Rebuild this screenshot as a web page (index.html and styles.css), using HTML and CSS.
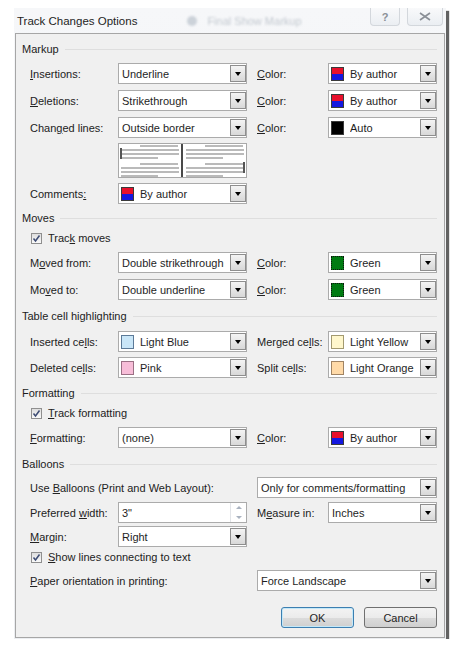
FILE: index.html
```html
<!DOCTYPE html>
<html lang="en">
<head>
    <meta charset="UTF-8">
    <link rel="stylesheet" href="styles.css">
</head>
<body>
    <div class="window">
        <div class="titlebar">
            <span class="title">Track Changes Options</span>
            <span class="ghost"><span class="ghost-icon"></span>Final Show Markup</span>
            <div class="caption-buttons">
                <span class="cap-btn cap-help">?</span>
                <span class="cap-btn cap-close">
                    <svg width="12" height="9" viewBox="0 0 12 9"><path d="M1 1 L11 8 M11 1 L1 8" stroke="#8a8f96" stroke-width="1.6" fill="none"/></svg>
                </span>
            </div>
        </div>

        <div class="panel">
            <!-- Markup -->
            <div class="group-title first">Markup</div>

            <div class="row">
                <span class="lbl"><u>I</u>nsertions:</span>
                <div class="combo"><span class="value">Underline</span><span class="arrow"></span></div>
                <span class="lbl lbl-color"><u>C</u>olor:</span>
                <div class="combo combo-color"><span class="swatch sw-author"></span><span class="value">By author</span><span class="arrow"></span></div>
            </div>

            <div class="row">
                <span class="lbl"><u>D</u>eletions:</span>
                <div class="combo"><span class="value">Strikethrough</span><span class="arrow"></span></div>
                <span class="lbl lbl-color"><u>C</u>olor:</span>
                <div class="combo combo-color"><span class="swatch sw-author"></span><span class="value">By author</span><span class="arrow"></span></div>
            </div>

            <div class="row">
                <span class="lbl">Chan<u>g</u>ed lines:</span>
                <div class="combo"><span class="value">Outside border</span><span class="arrow"></span></div>
                <span class="lbl lbl-color"><u>C</u>olor:</span>
                <div class="combo combo-color"><span class="swatch sw-auto"></span><span class="value">Auto</span><span class="arrow"></span></div>
            </div>

            <div class="preview-row">
                <svg class="preview" width="129" height="35" viewBox="0 0 129 35">
                    <rect x="0.5" y="0.5" width="128" height="34" fill="#fff" stroke="#a9a9a9"/>
                    <g stroke="#a4a4a4" stroke-width="1.4">
                        <path d="M22 3 H60 M3 7 H61 M3 11 H61 M3 15 H40 M22 21 H60 M3 25 H61 M3 29 H61 M3 33 H40"/>
                        <path d="M87 3 H125 M68 7 H126 M68 11 H126 M68 15 H105 M87 21 H125 M68 25 H126 M68 29 H126 M68 33 H105"/>
                    </g>
                    <rect x="63" y="1" width="2" height="33" fill="#4a4a4a"/>
                    <rect x="2" y="5" width="2" height="11" fill="#555"/>
                    <rect x="125" y="19" width="2" height="11" fill="#555"/>
                </svg>
            </div>

            <div class="row row-after-preview">
                <span class="lbl">Comments<u>:</u></span>
                <div class="combo"><span class="swatch sw-author"></span><span class="value">By author</span><span class="arrow"></span></div>
            </div>

            <!-- Moves -->
            <div class="group-title g-moves">Moves</div>

            <div class="check-row">
                <span class="checkbox"><svg width="9" height="9" viewBox="0 0 9 9"><path d="M1.5 4.5 L3.5 7 L7.5 1.5" stroke="#3d4c74" stroke-width="1.5" fill="none"/></svg></span>
                <span class="check-label">Trac<u>k</u> moves</span>
            </div>

            <div class="row">
                <span class="lbl">M<u>o</u>ved from:</span>
                <div class="combo"><span class="value">Double strikethrough</span><span class="arrow"></span></div>
                <span class="lbl lbl-color"><u>C</u>olor:</span>
                <div class="combo combo-color"><span class="swatch sw-green"></span><span class="value">Green</span><span class="arrow"></span></div>
            </div>

            <div class="row">
                <span class="lbl">Mo<u>v</u>ed to:</span>
                <div class="combo"><span class="value">Double underline</span><span class="arrow"></span></div>
                <span class="lbl lbl-color"><u>C</u>olor:</span>
                <div class="combo combo-color"><span class="swatch sw-green"></span><span class="value">Green</span><span class="arrow"></span></div>
            </div>

            <!-- Table cell highlighting -->
            <div class="group-title g-wide">Table cell highlighting</div>

            <div class="row row-loose">
                <span class="lbl">Inserted ce<u>l</u>ls:</span>
                <div class="combo"><span class="swatch sw-lightblue"></span><span class="value">Light Blue</span><span class="arrow"></span></div>
                <span class="lbl lbl-color">Merged ce<u>l</u>ls:</span>
                <div class="combo combo-color"><span class="swatch sw-lightyellow"></span><span class="value">Light Yellow</span><span class="arrow"></span></div>
            </div>

            <div class="row row-close">
                <span class="lbl">Deleted ce<u>l</u>ls:</span>
                <div class="combo"><span class="swatch sw-pink"></span><span class="value">Pink</span><span class="arrow"></span></div>
                <span class="lbl lbl-color">Split ce<u>l</u>ls:</span>
                <div class="combo combo-color"><span class="swatch sw-lightorange"></span><span class="value">Light Orange</span><span class="arrow"></span></div>
            </div>

            <!-- Formatting -->
            <div class="group-title">Formatting</div>

            <div class="check-row">
                <span class="checkbox"><svg width="9" height="9" viewBox="0 0 9 9"><path d="M1.5 4.5 L3.5 7 L7.5 1.5" stroke="#3d4c74" stroke-width="1.5" fill="none"/></svg></span>
                <span class="check-label"><u>T</u>rack formatting</span>
            </div>

            <div class="row">
                <span class="lbl"><u>F</u>ormatting:</span>
                <div class="combo"><span class="value">(none)</span><span class="arrow"></span></div>
                <span class="lbl lbl-color"><u>C</u>olor:</span>
                <div class="combo combo-color"><span class="swatch sw-author"></span><span class="value">By author</span><span class="arrow"></span></div>
            </div>

            <!-- Balloons -->
            <div class="group-title g-wide">Balloons</div>

            <div class="row row-balloons">
                <span class="lbl lbl-wide">Use <u>B</u>alloons (Print and Web Layout):</span>
                <div class="combo combo-wide"><span class="value">Only for comments/formatting</span><span class="arrow"></span></div>
            </div>

            <div class="row row-tight">
                <span class="lbl">Preferred <u>w</u>idth:</span>
                <div class="combo"><span class="value">3"</span>
                    <span class="spin"><span class="spin-up"></span><span class="spin-down"></span></span>
                </div>
                <span class="lbl lbl-color">M<u>e</u>asure in:</span>
                <div class="combo combo-color"><span class="value">Inches</span><span class="arrow"></span></div>
            </div>

            <div class="row row-tighter">
                <span class="lbl"><u>M</u>argin:</span>
                <div class="combo"><span class="value">Right</span><span class="arrow"></span></div>
            </div>

            <div class="check-row check-tight">
                <span class="checkbox"><svg width="9" height="9" viewBox="0 0 9 9"><path d="M1.5 4.5 L3.5 7 L7.5 1.5" stroke="#3d4c74" stroke-width="1.5" fill="none"/></svg></span>
                <span class="check-label"><u>S</u>how lines connecting to text</span>
            </div>

            <div class="row row-paper">
                <span class="lbl lbl-wide"><u>P</u>aper orientation in printing:</span>
                <div class="combo combo-wide"><span class="value">Force Landscape</span><span class="arrow"></span></div>
            </div>

            <div class="buttons">
                <button type="button" class="btn btn-default">OK</button>
                <button type="button" class="btn">Cancel</button>
            </div>
        </div>
    </div>
</body>
</html>
```

FILE: styles.css
```css
* {
    box-sizing: border-box;
}

body {
    margin: 0;
    background-color: #fff;
    font-family: "Liberation Sans", Arial, sans-serif;
    font-size: 11px;
    color: #222;
}

u {
    text-decoration-thickness: 1px;
    text-underline-offset: 1px;
}

.window {
    margin: 8px 0 0 14px;
    width: 432px;
    padding: 0 1px 1px 1px;
    background: linear-gradient(#f6f7f9, #eceef1);
    box-shadow: 3px 3px 1px rgba(70, 70, 70, 0.85);
}

.titlebar {
    height: 25px;
    display: flex;
    align-items: center;
}

.title {
    margin-left: 2px;
    font-size: 11.5px;
    color: #1e1e1e;
}

.ghost {
    display: flex;
    align-items: center;
    margin-left: 50px;
    color: #c3c9d0;
    filter: blur(1px);
}

.ghost-icon {
    width: 10px;
    height: 10px;
    border-radius: 50%;
    background-color: #ccd2d9;
    margin-right: 10px;
}

.caption-buttons {
    display: flex;
    gap: 7px;
    margin-left: auto;
    margin-right: 2px;
    align-self: flex-start;
}

.cap-btn {
    height: 18px;
    display: flex;
    align-items: center;
    justify-content: center;
    border: 1px solid #d3d7dc;
    border-top: none;
    border-radius: 0 0 4px 4px;
    background: linear-gradient(rgba(255, 255, 255, 0.3), rgba(232, 236, 241, 0.8));
    color: #8a8f96;
    font-weight: bold;
    font-size: 11px;
}

.cap-help {
    width: 30px;
}

.cap-close {
    width: 36px;
}

.panel {
    border: 1px solid #a6a6a6;
    background-color: #f0f0f0;
    padding: 8px 7px 9px 6px;
}

/* group headings with the thin rule after the text */
.group-title {
    display: flex;
    align-items: center;
    height: 14px;
    margin-top: 8px;
    color: #1c1c1c;
}

.group-title.first {
    margin-top: 0;
}

.group-title.g-moves {
    margin-top: 7px;
}

.group-title.g-wide {
    margin-top: 9px;
}

.group-title::after {
    content: "";
    flex: 1;
    margin-left: 6px;
    border-top: 1px solid #dedede;
}

.row {
    display: flex;
    align-items: center;
    height: 21px;
    margin-top: 6px;
    padding-left: 8px;
}

.group-title + .row,
.check-row + .row {
    margin-top: 7px;
}

.row.row-after-preview {
    margin-top: 5px;
}

.row.row-loose {
    margin-top: 8px;
}

.row.row-close {
    margin-top: 5px;
}

.row.row-balloons {
    margin-top: 6px;
}

.row.row-tight {
    margin-top: 4px;
}

.row.row-tighter {
    margin-top: 3px;
}

.row.row-paper {
    margin-top: 6px;
}

.lbl {
    width: 88px;
    flex-shrink: 0;
    white-space: nowrap;
}

.lbl-color {
    width: 71px;
    margin-left: 10px;
}

.lbl-wide {
    width: 227px;
}

.combo {
    display: flex;
    align-items: center;
    width: 129px;
    height: 21px;
    background-color: #fff;
    border: 1px solid #ababab;
    flex-shrink: 0;
}

.combo-color {
    width: 109px;
}

.combo-wide {
    width: 180px;
}

.value {
    flex: 1;
    padding-left: 3px;
    white-space: nowrap;
    overflow: hidden;
    color: #1e1e1e;
}

.swatch + .value {
    padding-left: 0;
}

.arrow {
    width: 16px;
    align-self: stretch;
    margin: 1px 0;
    border: 1px solid #8e8e8e;
    background: linear-gradient(#f4f4f4, #d8d8d8);
    display: flex;
    align-items: center;
    justify-content: center;
}

.arrow::after {
    content: "";
    border-left: 3.5px solid transparent;
    border-right: 3.5px solid transparent;
    border-top: 4px solid #000;
}

.spin {
    width: 16px;
    align-self: stretch;
    display: flex;
    flex-direction: column;
    border-left: 1px solid #e2e4e8;
}

.spin-up,
.spin-down {
    flex: 1;
    display: flex;
    align-items: center;
    justify-content: center;
}

.spin-up::after {
    content: "";
    border-left: 3px solid transparent;
    border-right: 3px solid transparent;
    border-bottom: 3px solid #a9b2bf;
}

.spin-down::after {
    content: "";
    border-left: 3px solid transparent;
    border-right: 3px solid transparent;
    border-top: 3px solid #a9b2bf;
}

.swatch {
    width: 13px;
    height: 14px;
    margin: 0 6px 0 2px;
    border: 1px solid #3a3a3a;
    flex-shrink: 0;
}

.sw-author {
    background: linear-gradient(#e8102c 50%, #1418e0 50%);
}

.sw-auto {
    background-color: #000;
}

.sw-green {
    background-color: #007b12;
    border: 1px dotted #111;
}

.sw-lightblue {
    background-color: #c9e6f8;
    border-color: #5c7a98;
}

.sw-pink {
    background-color: #f7bdd8;
    border-color: #9a7084;
}

.sw-lightyellow {
    background-color: #fff7cc;
    border-color: #a39a70;
}

.sw-lightorange {
    background-color: #ffdaa8;
    border-color: #a08464;
}

.preview-row {
    margin-top: 5px;
    padding-left: 96px;
    height: 35px;
}

.preview {
    display: block;
}

.check-row {
    display: flex;
    align-items: center;
    height: 14px;
    margin-top: 6px;
    padding-left: 9px;
}

.check-row.check-tight {
    margin-top: 3px;
}

.checkbox {
    width: 11px;
    height: 11px;
    border: 1px solid #8f8f8f;
    background: linear-gradient(#dedede, #fafafa);
    display: flex;
    align-items: center;
    justify-content: center;
}

.check-label {
    margin-left: 6px;
}

.buttons {
    display: flex;
    justify-content: flex-end;
    gap: 10px;
    margin-top: 16px;
}

.btn {
    width: 73px;
    height: 21px;
    padding: 0;
    border: 1px solid #707070;
    border-radius: 3px;
    background: linear-gradient(#f3f3f3 0%, #ebebeb 50%, #dcdcdc 51%, #cfcfcf 100%);
    font-family: "Liberation Sans", Arial, sans-serif;
    font-size: 11px;
    color: #1e1e1e;
}

.btn-default {
    border-color: #3c7fb1;
    box-shadow: inset 0 0 0 1px #c4e8f8;
}
```
